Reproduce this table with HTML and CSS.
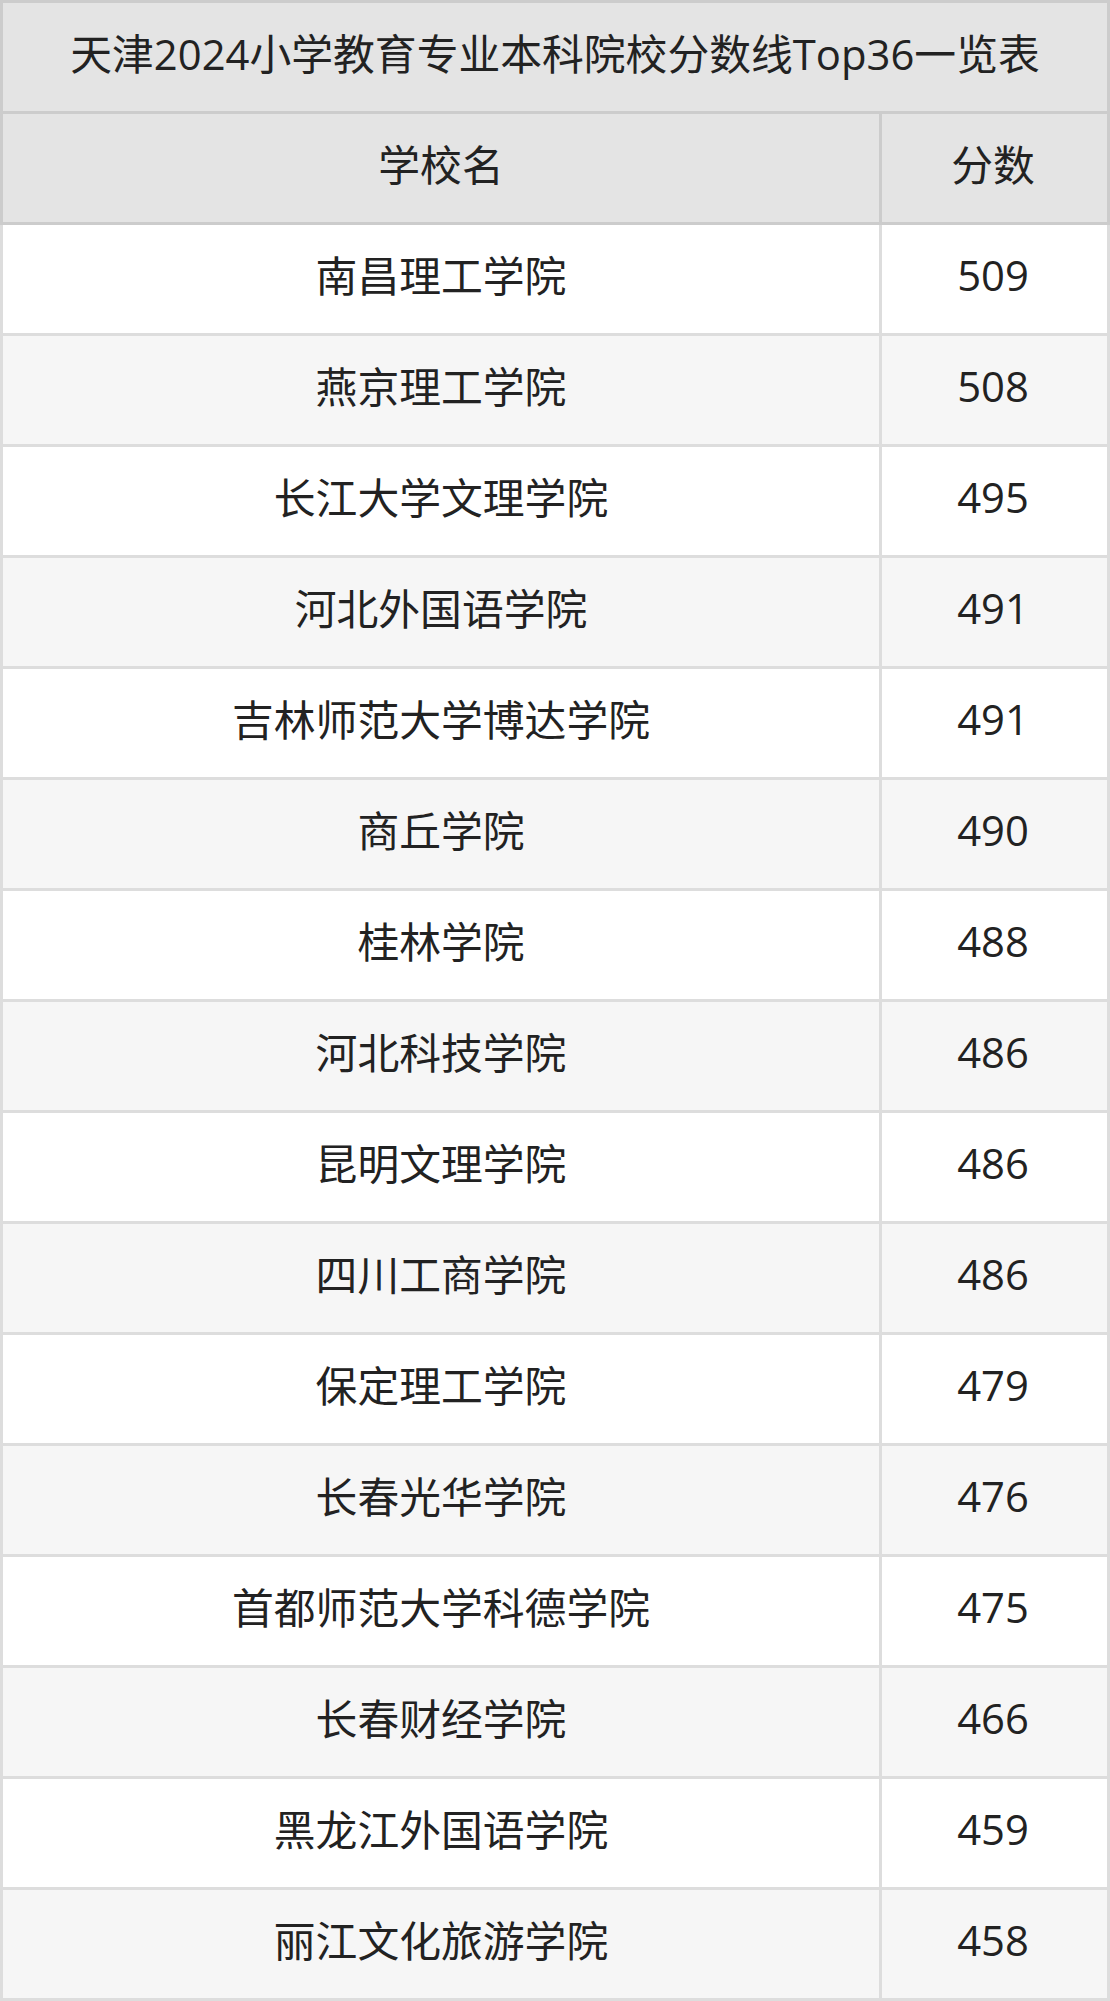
FILE: index.html
```html
<!DOCTYPE html>
<html lang="zh-CN">
<head>
<meta charset="utf-8">
<title>天津2024小学教育专业本科院校分数线Top36一览表</title>
<link rel="stylesheet" href="styles.css">
</head>
<body>
<div class="table">
  <div class="title">天津2024小学教育专业本科院校分数线Top36一览表</div>
  <div class="row head"><div class="cell name">学校名</div><div class="cell score">分数</div></div>
  <div class="row"><div class="cell name">南昌理工学院</div><div class="cell score">509</div></div>
  <div class="row alt"><div class="cell name">燕京理工学院</div><div class="cell score">508</div></div>
  <div class="row"><div class="cell name">长江大学文理学院</div><div class="cell score">495</div></div>
  <div class="row alt"><div class="cell name">河北外国语学院</div><div class="cell score">491</div></div>
  <div class="row"><div class="cell name">吉林师范大学博达学院</div><div class="cell score">491</div></div>
  <div class="row alt"><div class="cell name">商丘学院</div><div class="cell score">490</div></div>
  <div class="row"><div class="cell name">桂林学院</div><div class="cell score">488</div></div>
  <div class="row alt"><div class="cell name">河北科技学院</div><div class="cell score">486</div></div>
  <div class="row"><div class="cell name">昆明文理学院</div><div class="cell score">486</div></div>
  <div class="row alt"><div class="cell name">四川工商学院</div><div class="cell score">486</div></div>
  <div class="row"><div class="cell name">保定理工学院</div><div class="cell score">479</div></div>
  <div class="row alt"><div class="cell name">长春光华学院</div><div class="cell score">476</div></div>
  <div class="row"><div class="cell name">首都师范大学科德学院</div><div class="cell score">475</div></div>
  <div class="row alt"><div class="cell name">长春财经学院</div><div class="cell score">466</div></div>
  <div class="row"><div class="cell name">黑龙江外国语学院</div><div class="cell score">459</div></div>
  <div class="row alt"><div class="cell name">丽江文化旅游学院</div><div class="cell score">458</div></div>
</div>
</body>
</html>
```

FILE: styles.css
```css
html, body {
  margin: 0;
  padding: 0;
  background: #ffffff;
}

.table {
  width: 1110px;
  font-family: "Open Sans", "Noto Sans CJK SC", sans-serif;
  font-size: 41.8px;
  color: #222222;
}

.title {
  box-sizing: border-box;
  height: 114px;
  padding-bottom: 10px;
  border: 3px solid #cccccc;
  background: #e4e4e4;
  display: flex;
  align-items: center;
  justify-content: center;
}

.row {
  display: grid;
  grid-template-columns: 876px 225px;
  border: 3px solid #dddddd;
  border-top: none;
  background: #ffffff;
}

.row.alt {
  background: #f6f6f6;
}

.row.head {
  background: #e4e4e4;
  border-color: #cccccc;
}

.cell {
  box-sizing: border-box;
  height: 108px;
  padding-bottom: 10px;
  display: flex;
  align-items: center;
  justify-content: center;
}

.cell.score {
  border-left: 3px solid #dddddd;
}

.row.head .cell.score {
  border-left-color: #cccccc;
}
```
